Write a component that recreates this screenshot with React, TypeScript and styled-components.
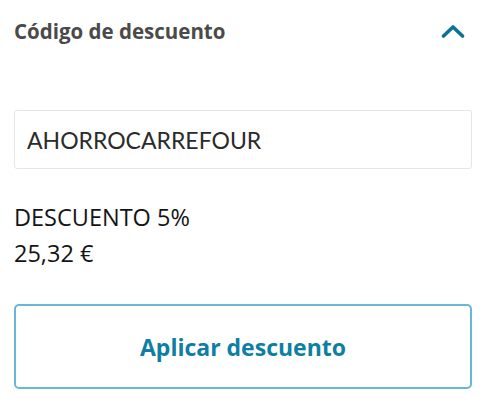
import React from 'react';
import styled, { createGlobalStyle } from 'styled-components';

const GlobalStyle = createGlobalStyle`
  html, body {
    margin: 0;
    padding: 0;
    background: #ffffff;
  }
  body {
    font-family: "Open Sans", "Noto Sans", sans-serif;
  }
`;

const Panel = styled.section`
  width: 488px;
  height: 408px;
  box-sizing: border-box;
  padding: 0 16px 0 14px;
  display: flex;
  flex-direction: column;
`;

const Header = styled.div`
  display: flex;
  align-items: center;
  justify-content: space-between;
  height: 62px;
  padding-right: 7px;
`;

const Title = styled.h2`
  margin: 0;
  font-size: 20.5px;
  font-weight: 700;
  color: #4a4a4a;
`;

const Toggle = styled.button`
  border: 0;
  background: none;
  padding: 0;
  display: flex;
  cursor: pointer;
`;

const CodeInput = styled.input`
  margin-top: 48px;
  height: 59px;
  box-sizing: border-box;
  border: 1px solid #e6e6e6;
  border-radius: 3px;
  padding: 0 12px;
  font-family: Lato, "Open Sans", sans-serif;
  font-size: 23px;
  color: #2b2b2b;
  outline: none;
`;

const Discount = styled.div`
  margin-top: 30px;
  display: flex;
  flex-direction: column;
`;

const DiscountLine = styled.span`
  font-size: 23.5px;
  line-height: 36px;
  color: #141414;
`;

const ApplyButton = styled.button`
  margin-top: 33px;
  height: 85px;
  border: 2px solid #69b6d6;
  border-radius: 5px;
  background: #ffffff;
  font-family: "Open Sans", "Noto Sans", sans-serif;
  font-size: 23px;
  font-weight: 700;
  color: #0f7ea3;
  cursor: pointer;
`;

function Chevron() {
  return (
    <svg width="24" height="14" viewBox="0 0 24 14" fill="none">
      <path d="M2.5 12 L12 3 L21.5 12" stroke="#0b7197" strokeWidth="3.6" strokeLinecap="round" strokeLinejoin="round" />
    </svg>
  );
}

export default function App() {
  return (
    <>
      <GlobalStyle />
      <Panel>
        <Header>
          <Title>Código de descuento</Title>
          <Toggle aria-label="Cerrar">
            <Chevron />
          </Toggle>
        </Header>
        <CodeInput defaultValue="AHORROCARREFOUR" />
        <Discount>
          <DiscountLine>DESCUENTO 5%</DiscountLine>
          <DiscountLine>25,32 €</DiscountLine>
        </Discount>
        <ApplyButton>Aplicar descuento</ApplyButton>
      </Panel>
    </>
  );
}
